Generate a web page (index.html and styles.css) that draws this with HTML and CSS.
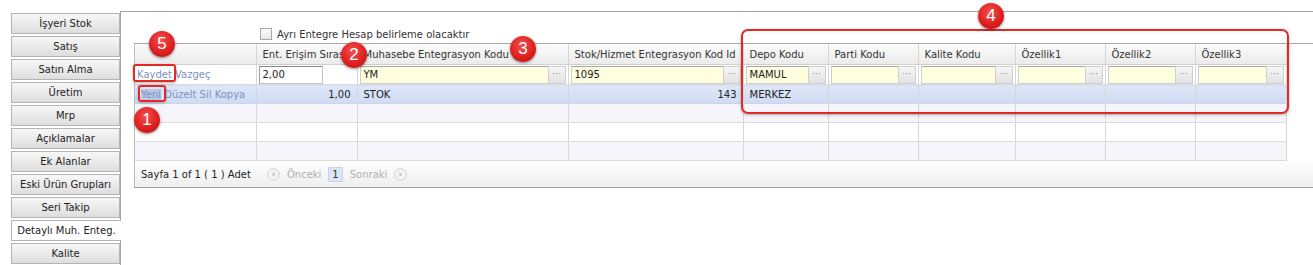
FILE: index.html
```html
<!DOCTYPE html>
<html>
<head>
<meta charset="utf-8">
<title>Detaylı Muh. Enteg.</title>
<link rel="stylesheet" href="styles.css">
</head>
<body>
<div class="page">
  <div class="tabs">
    <div class="tab">İşyeri Stok</div>
    <div class="tab">Satış</div>
    <div class="tab">Satın Alma</div>
    <div class="tab">Üretim</div>
    <div class="tab">Mrp</div>
    <div class="tab">Açıklamalar</div>
    <div class="tab">Ek Alanlar</div>
    <div class="tab">Eski Ürün Grupları</div>
    <div class="tab">Seri Takip</div>
    <div class="tab active">Detaylı Muh. Enteg.</div>
    <div class="tab">Kalite</div>
  </div>

  <div class="panel">
    <div class="option-row">
      <span class="checkbox"></span>
      <span>Ayrı Entegre Hesap belirleme olacaktır</span>
    </div>

    <div class="grid-wrap">
      <table class="grid">
        <colgroup>
          <col style="width:121px"><col style="width:101px"><col style="width:211px">
          <col style="width:175px"><col style="width:85px"><col style="width:90px">
          <col style="width:97px"><col style="width:90px"><col style="width:90px"><col style="width:91px">
        </colgroup>
        <thead>
          <tr>
            <th></th>
            <th>Ent. Erişim Sırası</th>
            <th>Muhasebe Entegrasyon Kodu</th>
            <th>Stok/Hizmet Entegrasyon Kod Id</th>
            <th>Depo Kodu</th>
            <th>Parti Kodu</th>
            <th>Kalite Kodu</th>
            <th>Özellik1</th>
            <th>Özellik2</th>
            <th>Özellik3</th>
          </tr>
        </thead>
        <tbody>
          <tr class="edit-row">
            <td class="links"><a>Kaydet</a> <a>Vazgeç</a></td>
            <td><div class="text-input">2,00</div></td>
            <td><div class="lookup"><span class="value">YM</span><span class="dots">···</span></div></td>
            <td><div class="lookup"><span class="value">1095</span><span class="dots">···</span></div></td>
            <td><div class="lookup"><span class="value">MAMUL</span><span class="dots">···</span></div></td>
            <td><div class="lookup"><span class="value"></span><span class="dots">···</span></div></td>
            <td><div class="lookup"><span class="value"></span><span class="dots">···</span></div></td>
            <td><div class="lookup"><span class="value"></span><span class="dots">···</span></div></td>
            <td><div class="lookup"><span class="value"></span><span class="dots">···</span></div></td>
            <td><div class="lookup"><span class="value"></span><span class="dots">···</span></div></td>
          </tr>
          <tr class="data-row">
            <td class="links"><a class="hover">Yeni</a> <a>Düzelt</a> <a>Sil</a> <a>Kopya</a></td>
            <td class="num">1,00</td>
            <td>STOK</td>
            <td class="num">143</td>
            <td>MERKEZ</td>
            <td></td><td></td><td></td><td></td><td></td>
          </tr>
          <tr class="empty alt"><td></td><td></td><td></td><td></td><td></td><td></td><td></td><td></td><td></td><td></td></tr>
          <tr class="empty"><td></td><td></td><td></td><td></td><td></td><td></td><td></td><td></td><td></td><td></td></tr>
          <tr class="empty alt"><td></td><td></td><td></td><td></td><td></td><td></td><td></td><td></td><td></td><td></td></tr>
        </tbody>
      </table>

      <div class="pager">
        <span class="summary">Sayfa 1 of 1 ( 1 ) Adet</span>
        <span class="nav-icon">
          <svg width="13" height="13" viewBox="0 0 13 13"><circle cx="6.5" cy="6.5" r="5.8" fill="#f4f4f4" stroke="#cfcfcf"/><path d="M7.6 4 L4.8 6.5 L7.6 9 Z" fill="#c4c4c4"/></svg>
        </span>
        <span class="nav-text">Önceki</span>
        <span class="page-num">1</span>
        <span class="nav-text">Sonraki</span>
        <span class="nav-icon">
          <svg width="13" height="13" viewBox="0 0 13 13"><circle cx="6.5" cy="6.5" r="5.8" fill="#f4f4f4" stroke="#cfcfcf"/><path d="M5.4 4 L8.2 6.5 L5.4 9 Z" fill="#c4c4c4"/></svg>
        </span>
      </div>
    </div>
  </div>

  <!-- annotation marks -->
  <div class="mark-box box-kaydet"></div>
  <div class="mark-box box-yeni"></div>
  <div class="mark-box box-cols"></div>
  <div class="badge badge-1">1</div>
  <div class="badge badge-2">2</div>
  <div class="badge badge-3">3</div>
  <div class="badge badge-4">4</div>
  <div class="badge badge-5">5</div>
</div>
</body>
</html>
```

FILE: styles.css
```css
body {
  margin: 0;
  font-family: "DejaVu Sans", Verdana, sans-serif;
  font-size: 10px;
  color: #222;
  background-color: #fff;
  overflow: hidden;
}

.page {
  position: relative;
  display: flex;
  width: 1313px;
  height: 265px;
}

/* left tab strip */
.tabs {
  width: 109px;
  padding: 13px 0 0 11px;
  flex-shrink: 0;
}

.tab {
  box-sizing: border-box;
  height: 21px;
  margin-bottom: 2px;
  border: 1px solid #b4b4b4;
  background: linear-gradient(#f7f7f7, #dedede);
  display: flex;
  align-items: center;
  justify-content: center;
  white-space: nowrap;
  color: #222;
}

.tab.active {
  background: #fff;
  border-right: none;
  margin-right: -1px;
  position: relative;
  z-index: 1;
}

/* right panel */
.panel {
  flex: 1;
  margin-top: 11px;
  height: 252px;
  border-top: 1px solid #a4a4a4;
  border-left: 1px solid #a4a4a4;
  padding: 14px 0 0 13px;
}

.option-row {
  display: flex;
  align-items: center;
  height: 16px;
  padding-left: 126px;
  gap: 5px;
  color: #333;
}

.checkbox {
  box-sizing: border-box;
  width: 12px;
  height: 12px;
  border: 1px solid #a8a8a8;
  background: linear-gradient(#fdfdfd, #e8e8e8);
}

.grid-wrap {
  margin-top: 1px;
  margin-right: -10px;
  border-top: 1px solid #a8a8a8;
  border-left: 1px solid #bdbdbd;
  border-bottom: 1px solid #a0a0a0;
}

.grid {
  border-collapse: collapse;
  table-layout: fixed;
  width: 1151px;
}

.grid th,
.grid td {
  border-right: 1px solid #d6d6d6;
  border-bottom: 1px solid #dcdcdc;
  padding: 0 6px;
  white-space: nowrap;
  overflow: hidden;
  text-align: left;
}

.grid th {
  height: 20px;
  font-weight: normal;
  color: #333;
  background: linear-gradient(#fbfbfb, #ebebeb);
  border-bottom-color: #cfcfcf;
}

.grid .edit-row td {
  height: 19px;
  padding: 0 2px;
  background: #fff;
}

.grid .edit-row td.links {
  padding-left: 2px;
}

.links a {
  color: #7d90bb;
}

.links a.hover {
  background-color: #b9c7e3;
}

.text-input {
  box-sizing: border-box;
  width: 64px;
  height: 18px;
  border: 1px solid #9a9a9a;
  border-color: #888 #c4c4c4 #c4c4c4 #9a9a9a;
  padding: 2px 3px;
  line-height: 12px;
}

.lookup {
  display: flex;
  height: 18px;
}

.lookup .value {
  flex: 1;
  box-sizing: border-box;
  border: 1px solid #cfcfcf;
  border-top-color: #a6a6a6;
  border-right: none;
  background-color: #ffffe0;
  padding: 2px 3px;
  line-height: 12px;
}

.lookup .dots {
  box-sizing: border-box;
  width: 18px;
  border: 1px solid #cfcfcf;
  background: linear-gradient(#f6f6f6, #e2e2e2);
  color: #8a8a8a;
  font-size: 9px;
  text-align: center;
  line-height: 14px;
}

.grid .data-row td {
  height: 18px;
  background: linear-gradient(#dde7f8, #cfdbf4);
  border-bottom-color: #cdd6e6;
}

.grid .data-row td.links {
  padding-left: 6px;
}

.grid td.num {
  text-align: right;
}

.grid .empty td {
  height: 18px;
  background-color: #fff;
}

.grid .empty.alt td {
  background-color: #f6f5fc;
}

.pager {
  display: flex;
  align-items: center;
  height: 26px;
  padding-left: 6px;
  background: linear-gradient(#fefefe, #efefef);
  color: #222;
}

.pager .summary {
  margin-right: 12px;
}

.nav-icon {
  display: flex;
  margin: 0 4px;
}

.nav-text {
  color: #b0b0b0;
  margin: 0 3px;
}

.page-num {
  box-sizing: border-box;
  height: 15px;
  padding: 0 3px;
  margin: 0 4px;
  border: 1px solid #c5d2ea;
  background-color: #dde6f6;
  line-height: 13px;
  color: #333;
}

/* red annotation marks */
.mark-box {
  position: absolute;
  box-sizing: border-box;
  border: 2px solid #e42828;
  box-shadow: 0 1px 3px rgba(0, 0, 0, 0.3);
}

.box-kaydet {
  left: 133px;
  top: 64px;
  width: 43px;
  height: 18px;
  border-radius: 3px;
}

.box-yeni {
  left: 138px;
  top: 85px;
  width: 28px;
  height: 17px;
  border-radius: 3px;
}

.box-cols {
  left: 741px;
  top: 29px;
  width: 548px;
  height: 85px;
  border-radius: 7px;
}

.badge {
  position: absolute;
  width: 26px;
  height: 26px;
  margin: -13px 0 0 -13px;
  border-radius: 50%;
  background: radial-gradient(circle at 45% 35%, #f25050 0%, #de2020 55%, #b50f0f 100%);
  box-shadow: 0 1px 3px rgba(0, 0, 0, 0.45);
  color: #fff;
  font-family: "Liberation Sans", Arial, sans-serif;
  font-size: 17px;
  line-height: 26px;
  text-align: center;
}

.badge-1 { left: 147px; top: 120px; }
.badge-2 { left: 354px; top: 55px; }
.badge-3 { left: 523px; top: 49px; }
.badge-4 { left: 991px; top: 16px; }
.badge-5 { left: 162px; top: 44px; }
```
